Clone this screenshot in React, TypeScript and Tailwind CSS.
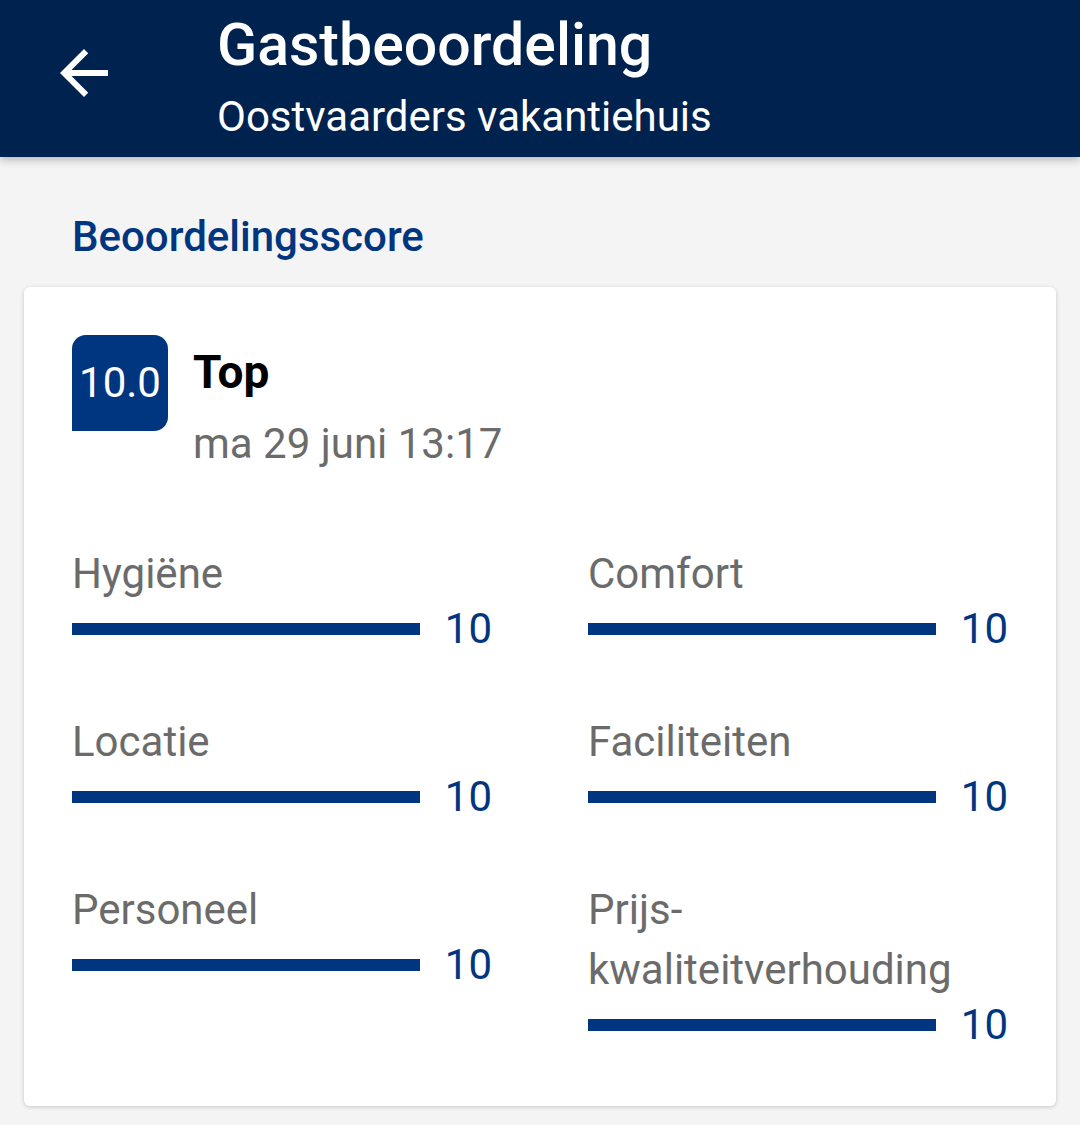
import React from "react";

const scores = [
  { label: "Hygiëne", value: 10 },
  { label: "Comfort", value: 10 },
  { label: "Locatie", value: 10 },
  { label: "Faciliteiten", value: 10 },
  { label: "Personeel", value: 10 },
  { label: "Prijs-\nkwaliteitverhouding", value: 10 },
];

function ScoreRow({ label, value }: { label: string; value: number }) {
  return (
    <div>
      <p className="text-[42px] leading-[60px] text-[#6b6b6b] whitespace-pre-line">{label}</p>
      <div className="flex items-center">
        <div className="w-[348px] h-[12px] bg-[#e6e6e6]">
          <div className="h-full bg-[#003580]" style={{ width: `${value * 10}%` }} />
        </div>
        <span className="ml-[25px] text-[42px] leading-[50px] text-[#003580]">{value}</span>
      </div>
    </div>
  );
}

export default function App() {
  return (
    <div
      className="min-h-[1125px] bg-[#f4f4f4]"
      style={{ fontFamily: "Roboto, 'Liberation Sans', sans-serif" }}
    >
      {/* Toolbar */}
      <header className="relative z-10 h-[157px] bg-[#00224f] flex items-start pt-[13px] pl-[48px] shadow-[0_3px_8px_rgba(0,0,0,0.25)]">
        <button className="w-[72px] h-[72px] mt-[24px] flex items-center justify-center">
          <svg width="72" height="72" viewBox="0 0 24 24" fill="white">
            <path d="M20 11H7.83l5.59-5.59L12 4l-8 8 8 8 1.41-1.41L7.83 13H20v-2z" />
          </svg>
        </button>
        <div className="ml-[97px] text-white">
          <h1 className="text-[59px] leading-[64px] font-medium">Gastbeoordeling</h1>
          <p className="mt-[12px] text-[42px] leading-[56px]">Oostvaarders vakantiehuis</p>
        </div>
      </header>

      <div className="pt-[56px] pb-[19px]">
        <h2 className="pl-[72px] text-[42px] leading-[48px] font-medium text-[#003580]">Beoordelingsscore</h2>

        {/* Card */}
        <div className="mx-6 mt-[26px] bg-white rounded-[6px] shadow-[0_1px_4px_rgba(0,0,0,0.18)] px-[48px] pt-[48px] pb-[56px]">
          <div className="flex items-start">
            <div className="w-[96px] h-[96px] bg-[#003580] rounded-t-[14px] rounded-br-[14px] flex items-center justify-center">
              <span className="text-white text-[42px] leading-none">10.0</span>
            </div>
            <div className="ml-[25px]">
              <p className="mt-[5px] text-[46px] leading-[64px] font-bold text-black">Top</p>
              <p className="mt-[10px] text-[42px] leading-[60px] text-[#6b6b6b]">ma 29 juni 13:17</p>
            </div>
          </div>

          <div className="mt-[70px] grid grid-cols-2 gap-x-[96px] gap-y-[58px]">
            {scores.map((s) => (
              <ScoreRow key={s.label} label={s.label} value={s.value} />
            ))}
          </div>
        </div>
      </div>
    </div>
  );
}
